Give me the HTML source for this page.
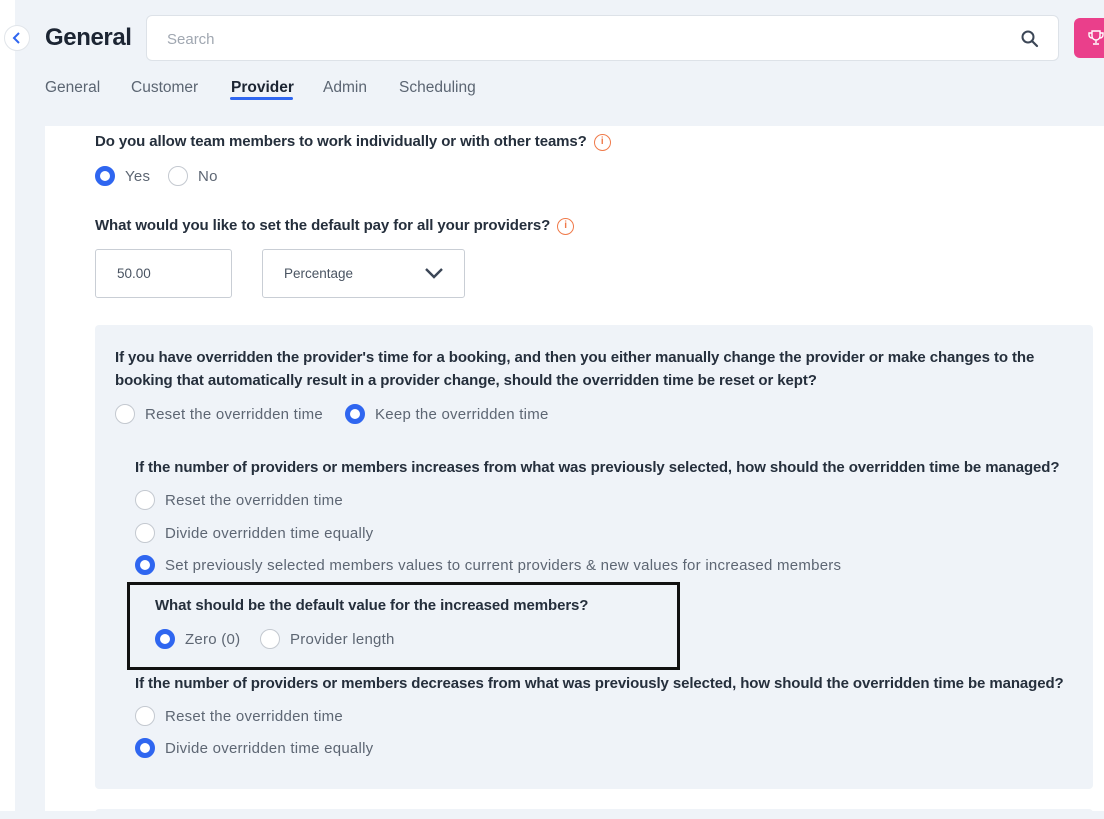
<!DOCTYPE html>
<html><head><meta charset="utf-8"><style>
*{margin:0;padding:0;box-sizing:border-box}
body{width:1104px;height:811px;overflow:hidden;background:#eff3f8;font-family:"Liberation Sans",sans-serif;position:relative;color:#2a3342}
.a{position:absolute;white-space:nowrap}
.q{font-weight:bold;font-size:15px;letter-spacing:-0.1px;color:#252f3c}
.o{font-size:15px;color:#5d6673;letter-spacing:0.25px}
.r{position:absolute;width:20px;height:20px;border-radius:50%;border:1px solid #c4c9d0;background:#fff}
.r.c{border:5px solid #2f66f0;background:#fff}
.tab{font-size:15.5px;color:#5b6572}
.info{display:inline-block;width:17px;height:17px;border:1.5px solid #f07a4a;border-radius:50%;color:#f07a4a;font-size:10px;text-align:center;line-height:14px;font-weight:bold;vertical-align:2px;margin-left:7px}
</style></head><body>
<div class="a" style="left:0;top:0;width:15px;height:811px;background:#fff"></div>
<div class="a" style="left:4px;top:25px;width:26px;height:26px;border-radius:50%;background:#fff;border:1px solid #e1e5ea"></div>
<svg class="a" style="left:11px;top:31px" width="12" height="14" viewBox="0 0 12 14"><path d="M8 2L3 7l5 5" fill="none" stroke="#2f66f0" stroke-width="2"/></svg>
<div class="a" style="left:45px;top:24px;font-size:24px;font-weight:bold;color:#1c2533;letter-spacing:-0.4px">General</div>
<div class="a" style="left:146px;top:15px;width:913px;height:46px;background:#fff;border:1px solid #dde2e8;border-radius:6px"></div>
<div class="a" style="left:167px;top:31px;font-size:15px;color:#a0a7b1">Search</div>
<svg class="a" style="left:1020px;top:29px" width="20" height="20" viewBox="0 0 20 20"><circle cx="8" cy="8" r="5.5" fill="none" stroke="#3b4656" stroke-width="2"/><line x1="12" y1="12" x2="17" y2="17" stroke="#3b4656" stroke-width="2.2" stroke-linecap="round"/></svg>
<div class="a" style="left:1074px;top:18px;width:40px;height:40px;background:#ea3f8b;border-radius:6px"></div>
<svg class="a" style="left:1088px;top:29px" width="16" height="18" viewBox="0 0 16 18"><path d="M4 2h8v5a4 4 0 0 1-8 0z M4 4H1v2a3 3 0 0 0 3 3 M12 4h3v2a3 3 0 0 1-3 3 M8 11v3 M5 15h6" fill="none" stroke="#fff" stroke-width="1.4"/></svg>
<div class="a tab" style="left:45px;top:79px">General</div>
<div class="a tab" style="left:131px;top:79px">Customer</div>
<div class="a tab" style="left:231px;top:79px;font-weight:bold;color:#1c2533">Provider</div>
<div class="a" style="left:230px;top:97px;width:63px;height:3px;background:#2f66f0;border-radius:2px"></div>
<div class="a tab" style="left:323px;top:79px">Admin</div>
<div class="a tab" style="left:399px;top:79px">Scheduling</div>
<div class="a" style="left:45px;top:126px;width:1059px;height:685px;background:#fff"></div>
<div class="a q" style="left:95px;top:133px">Do you allow team members to work individually or with other teams?<span class="info">i</span></div>
<div class="r c" style="left:95px;top:166px"></div><div class="a o" style="left:125px;top:168px">Yes</div>
<div class="r" style="left:168px;top:166px"></div><div class="a o" style="left:198px;top:168px">No</div>
<div class="a q" style="left:95px;top:217px">What would you like to set the default pay for all your providers?<span class="info">i</span></div>
<div class="a" style="left:95px;top:249px;width:137px;height:49px;border:1px solid #c9ced5;border-radius:3px"></div>
<div class="a" style="left:117px;top:266px;font-size:13.5px;color:#4a5462">50.00</div>
<div class="a" style="left:262px;top:249px;width:203px;height:49px;border:1px solid #c9ced5;border-radius:3px"></div>
<div class="a" style="left:284px;top:266px;font-size:13.5px;color:#4a5462">Percentage</div>
<svg class="a" style="left:424px;top:267px" width="20" height="12" viewBox="0 0 20 12"><path d="M2 2l8 8 8-8" fill="none" stroke="#3b4656" stroke-width="2.4"/></svg>
<div class="a" style="left:95px;top:325px;width:998px;height:464px;background:#eff3f8;border-radius:4px"></div>
<div class="a q" style="left:115px;top:349px">If you have overridden the provider's time for a booking, and then you either manually change the provider or make changes to the</div>
<div class="a q" style="left:115px;top:372px">booking that automatically result in a provider change, should the overridden time be reset or kept?</div>
<div class="r" style="left:115px;top:404px"></div><div class="a o" style="left:145px;top:406px">Reset the overridden time</div>
<div class="r c" style="left:345px;top:404px"></div><div class="a o" style="left:375px;top:406px">Keep the overridden time</div>
<div class="a q" style="left:135px;top:459px">If the number of providers or members increases from what was previously selected, how should the overridden time be managed?</div>
<div class="r" style="left:135px;top:490px"></div><div class="a o" style="left:165px;top:492px">Reset the overridden time</div>
<div class="r" style="left:135px;top:523px"></div><div class="a o" style="left:165px;top:525px">Divide overridden time equally</div>
<div class="r c" style="left:135px;top:555px"></div><div class="a o" style="left:165px;top:557px">Set previously selected members values to current providers &amp; new values for increased members</div>
<div class="a" style="left:127px;top:582px;width:553px;height:88px;border:3px solid #111"></div>
<div class="a q" style="left:155px;top:597px">What should be the default value for the increased members?</div>
<div class="r c" style="left:155px;top:629px"></div><div class="a o" style="left:185px;top:631px">Zero (0)</div>
<div class="r" style="left:260px;top:629px"></div><div class="a o" style="left:290px;top:631px">Provider length</div>
<div class="a q" style="left:135px;top:675px">If the number of providers or members decreases from what was previously selected, how should the overridden time be managed?</div>
<div class="r" style="left:135px;top:706px"></div><div class="a o" style="left:165px;top:708px">Reset the overridden time</div>
<div class="r c" style="left:135px;top:738px"></div><div class="a o" style="left:165px;top:740px">Divide overridden time equally</div>
<div class="a" style="left:95px;top:809px;width:998px;height:10px;background:#eff3f8;border-radius:4px"></div>
</body></html>
